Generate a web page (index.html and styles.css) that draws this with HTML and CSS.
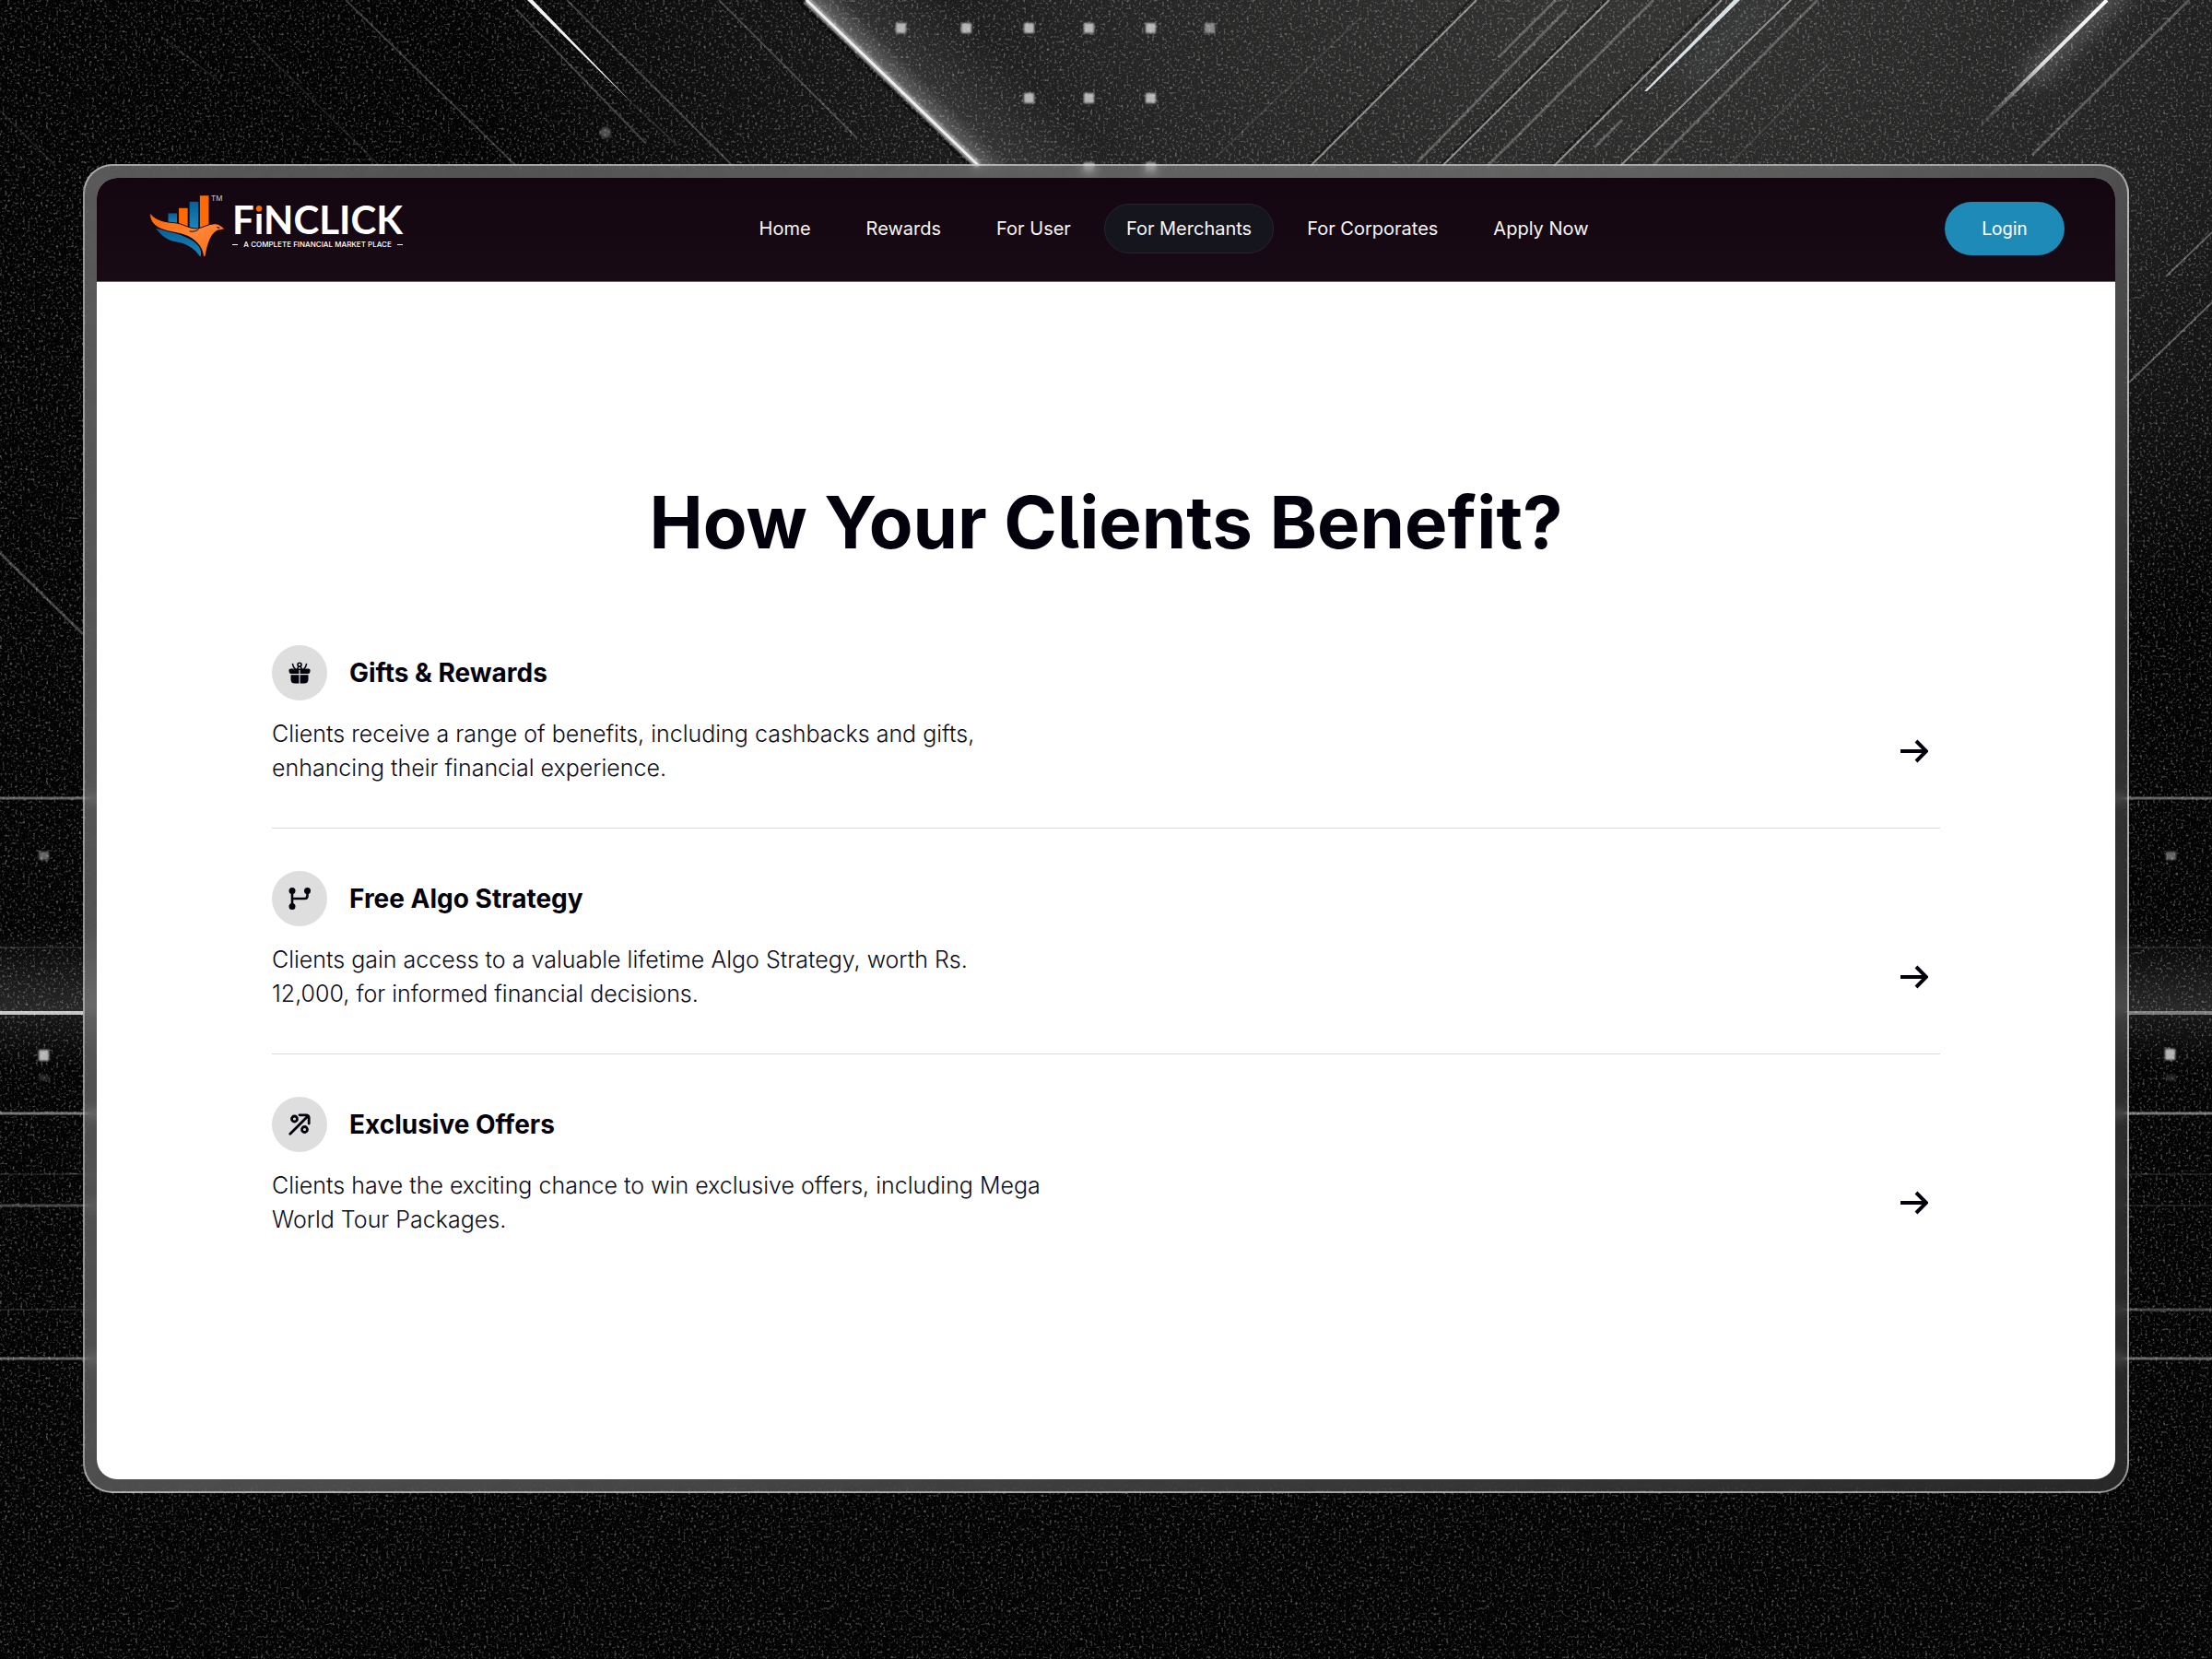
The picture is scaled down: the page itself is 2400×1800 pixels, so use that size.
FILE: index.html
```html
<!DOCTYPE html>
<html lang="en">
<head>
    <meta charset="UTF-8">
    <meta name="viewport" content="width=device-width, initial-scale=1.0">
    <title>For Merchants - FiNCLICK</title>
    <link rel="stylesheet" href="styles.css">
</head>
<body>

    <!-- Backdrop: light beams, dots and grain -->
    <svg class="backdrop" viewBox="0 0 2400 1800" preserveAspectRatio="xMidYMid slice" aria-hidden="true">
        <defs>
            <radialGradient id="sky" gradientUnits="userSpaceOnUse" cx="1750" cy="0" r="1250" gradientTransform="matrix(1 0 0 .6 0 0)">
                <stop offset="0" stop-color="#343433"/>
                <stop offset=".45" stop-color="#242424"/>
                <stop offset="1" stop-color="#030303"/>
            </radialGradient>
            <linearGradient id="beam" gradientUnits="userSpaceOnUse" x1="960" y1="90" x2="1040" y2="10">
                <stop offset="0" stop-color="#fff" stop-opacity=".4"/>
                <stop offset=".3" stop-color="#fff" stop-opacity=".1"/>
                <stop offset="1" stop-color="#fff" stop-opacity="0"/>
            </linearGradient>
            <linearGradient id="glowUp" x1="0" y1="0" x2="0" y2="1">
                <stop offset="0" stop-color="#fff" stop-opacity="0"/>
                <stop offset="1" stop-color="#fff" stop-opacity=".15"/>
            </linearGradient>
            <linearGradient id="glowDown" x1="0" y1="0" x2="0" y2="1">
                <stop offset="0" stop-color="#fff" stop-opacity=".08"/>
                <stop offset="1" stop-color="#fff" stop-opacity="0"/>
            </linearGradient>
            <linearGradient id="flare" gradientUnits="userSpaceOnUse" x1="2290" y1="0" x2="2145" y2="140">
                <stop offset="0" stop-color="#fff"/>
                <stop offset=".5" stop-color="#ddd"/>
                <stop offset="1" stop-color="#999" stop-opacity="0"/>
            </linearGradient>
            <filter id="blur" x="-50%" y="-50%" width="200%" height="200%">
                <feGaussianBlur stdDeviation="12"/>
            </filter>
            <filter id="soft" x="-20%" y="-20%" width="140%" height="140%">
                <feGaussianBlur stdDeviation="1"/>
            </filter>
            <filter id="grain" x="0" y="0" width="100%" height="100%">
                <feTurbulence type="fractalNoise" baseFrequency=".36" numOctaves="2" seed="4"/>
                <feColorMatrix values="0 0 0 0 1  0 0 0 0 1  0 0 0 0 1  3 0 0 0 -1.6"/>
            </filter>
        </defs>

        <rect width="2400" height="1800" fill="#030303"/>
        <rect width="2400" height="1800" fill="url(#sky)"/>

        <!-- diagonal lines -->
        <path d="M873 0L1060 180H1240L1060 0Z" fill="url(#beam)"/>
        <g fill="none" stroke="#fff">
            <path d="M866 0L1054 180" stroke="#000" stroke-opacity=".6" stroke-width="5"/>
            <path d="M875 0L1062 180" stroke="#999" stroke-width="8" filter="url(#soft)"/>
            <path d="M875 0L1062 180" stroke="#eee" stroke-width="3"/>
            <g stroke-opacity=".22" stroke-width="2">
                <path d="M375 0L560 180M560 10L700 155M615 0L795 180M780 0L930 150"/>
                <path d="M687 113L735 158" stroke-opacity=".12"/>
                <path d="M270 40L412 180M175 40L240 90M0 120L60 180" stroke-opacity=".1"/>
            </g>
            <path d="M1596 0L1418 180M1742 0L1562 180M1862 0L1682 180" stroke="#000" stroke-opacity=".4" stroke-width="3"/>
            <g stroke-opacity=".46" stroke-width="2">
                <path d="M1602 0L1422 180M1746 0L1565 180M1868 0L1686 180M1943 0L1758 180"/>
                <path d="M1700 10L1538 176M1794 0L1614 180M1972 0L1793 180" stroke-opacity=".24" stroke-width="3"/>
                <path d="M1688 0L1626 62M1760 130L1730 160M2375 0L2205 168" stroke-opacity=".24" stroke-width="3"/>
                <path d="M1475 20L1320 170M1985 68L1875 180" stroke-opacity=".1"/>
                <path d="M2400 252L2350 300M2400 328L2310 415" stroke-opacity=".3"/>
            </g>
            <path d="M0 600L90 688" stroke-opacity=".25" stroke-width="3"/>
            <path d="M1915 0L1830 85" stroke="#9ab" stroke-opacity=".14" stroke-width="18" filter="url(#blur)"/>
            <path d="M2310 -20L2200 88" stroke-opacity=".26" stroke-width="18" filter="url(#blur)"/>
            <path d="M2286 0L2145 140" stroke="url(#flare)" stroke-width="4"/>
        </g>
        <path d="M572 0H578L688 114Z" fill="#f4f4f4"/>
        <path d="M1881 0H1888L1787 99H1784Z" fill="#d5dfe4"/>

        <!-- horizontal lines -->
        <rect y="1010" width="2400" height="89" fill="url(#glowUp)"/>
        <rect y="1099" width="2400" height="60" fill="url(#glowDown)"/>
        <g fill="none" stroke="#fff" stroke-width="3">
            <path d="M0 866H2400M0 1474H2400" stroke-opacity=".38"/>
            <path d="M0 1099H90" stroke-opacity=".75" stroke-width="4"/>
            <path d="M2310 1099H2400" stroke-opacity=".42" stroke-width="4"/>
            <path d="M0 1208H2400" stroke-opacity=".45"/>
            <path d="M0 1308H1200M1200 1421H2400" stroke-opacity=".26"/>
            <path d="M0 1028H2400M0 1274H2400M0 1421H1200M1200 1308H2400" stroke-opacity=".1" stroke-width="2"/>
        </g>

        <!-- dots -->
        <g fill="#b4b4b4" filter="url(#soft)">
            <path d="M972 25h11v11h-11zM1043 25h11v11h-11zM1111 25h11v11h-11zM1176 25h11v11h-11zM1243 25h11v11h-11z"/>
            <path d="M1111 101h11v11h-11zM1176 101h11v11h-11zM1243 101h11v11h-11z"/>
            <path d="M1307 25h11v11h-11z" opacity=".7"/>
            <path d="M1176 176h11v11h-11zM1243 176h11v11h-11z" opacity=".8"/>
            <circle cx="657" cy="144" r="6" opacity=".4"/>
            <path d="M42 1139h11v12h-11zM2349 1138h11v12h-11z"/>
            <path d="M42 924h11v9h-11zM2350 924h11v9h-11z" opacity=".55"/>
            <path d="M42 1166h11v7h-11zM2350 1166h11v7h-11z" opacity=".2"/>
        </g>

        <rect width="2400" height="1800" filter="url(#grain)" opacity=".36"/>
    </svg>

    <div class="frame">
        <div class="screen">

            <header class="header">
                <a class="logo" href="#" aria-label="FiNCLICK home">
                    <svg class="logo-mark" viewBox="240 114 260 216" aria-hidden="true">
                        <defs>
                            <linearGradient id="orange" x1="0" y1="0" x2="1" y2="1">
                                <stop offset="0" stop-color="#ff6500"/>
                                <stop offset=".55" stop-color="#ff8435"/>
                                <stop offset="1" stop-color="#f96a0c"/>
                            </linearGradient>
                            <linearGradient id="blue" x1="0" y1="0" x2="0" y2="1">
                                <stop offset="0" stop-color="#05609a"/>
                                <stop offset="1" stop-color="#1c87b8"/>
                            </linearGradient>
                        </defs>
                        <rect x="308" y="184" width="29" height="34" fill="url(#blue)"/>
                        <rect x="343" y="167" width="29" height="60" fill="#ff6a05"/>
                        <rect x="378" y="146" width="29" height="88" fill="url(#blue)"/>
                        <rect x="412" y="126" width="29" height="112" fill="#ff6a05"/>
                        <path d="M268 234C300 240 345 250 378 268C408 284 421 303 414 327C394 298 366 281 332 277C302 272 284 254 268 234Z" fill="url(#blue)"/>
                        <path d="M248 181C260 202 290 213 328 215C356 217 374 234 402 234C424 232 438 218 462 218C476 218 484 228 495 236L471 240C448 250 438 282 430 326L423 326C420 296 404 276 374 260C344 246 310 247 284 235C256 222 246 204 248 181Z" fill="url(#orange)" stroke="#150710" stroke-width="3"/>
                        <path d="M378 243Q398 246 408 236" fill="none" stroke="#150710" stroke-width="3"/>
                        <path d="M466 227L479 231L472 234Z" fill="#150710"/>
                        <text class="logo-tm" x="449" y="144">TM</text>
                    </svg>
                    <span class="logo-text">
                        <span class="logo-name">F<span class="logo-i">i</span>NCLICK</span>
                        <span class="logo-tagline">A COMPLETE FINANCIAL MARKET PLACE</span>
                    </span>
                </a>

                <nav class="nav">
                    <a href="#">Home</a>
                    <a href="#">Rewards</a>
                    <a href="#">For User</a>
                    <a class="active" href="#">For Merchants</a>
                    <a href="#">For Corporates</a>
                    <a href="#">Apply Now</a>
                </nav>

                <button class="login" type="button">Login</button>
            </header>

            <main class="benefits">
                <h1>How Your Clients Benefit?</h1>

                <section class="benefit">
                    <div class="benefit-title">
                        <span class="benefit-icon">
                            <svg viewBox="0 0 24 24" aria-hidden="true">
                                <path d="M3 7.500H21A2 2 0 0 1 23.500 10Q23.500 13 21 13H12.600V9H11.400V13H3Q.5 13 .5 10A2 2 0 0 1 3 7.500ZM2.500 14.300H11.400V23.500H7Q2.500 23.500 2.500 19ZM12.600 14.300H21.500V19Q21.500 23.500 17 23.500H12.600Z"/>
                                <path d="M4.500 2.500Q5 6 7.500 8M19.500 2.500Q19 6 16.500 8M9.300 8.500L11 5M14.700 8.500L13 5" fill="none" stroke="currentColor" stroke-width="1.600" stroke-linecap="round"/>
                                <circle cx="12" cy="3.300" r="2" fill="none" stroke="currentColor" stroke-width="1.600"/>
                            </svg>
                        </span>
                        <h2>Gifts &amp; Rewards</h2>
                    </div>
                    <div class="benefit-body">
                        <p>Clients receive a range of benefits, including cashbacks and gifts, enhancing their financial experience.</p>
                        <a class="arrow" href="#" aria-label="Gifts &amp; Rewards">
                            <svg viewBox="0 0 30 26" aria-hidden="true"><path d="M0 13H27M17 2L28 13L17 24"/></svg>
                        </a>
                    </div>
                </section>

                <section class="benefit">
                    <div class="benefit-title">
                        <span class="benefit-icon">
                            <svg viewBox="0 0 24 24" aria-hidden="true">
                                <circle cx="4" cy="3.500" r="3.500"/>
                                <circle cx="20.500" cy="3.500" r="3.500"/>
                                <circle cx="4" cy="20.500" r="3.500"/>
                                <path d="M4 4V20M4 12H17.500Q20.500 12 20.500 9V4" fill="none" stroke="currentColor" stroke-width="2.600"/>
                            </svg>
                        </span>
                        <h2>Free Algo Strategy</h2>
                    </div>
                    <div class="benefit-body">
                        <p>Clients gain access to a valuable lifetime Algo Strategy, worth Rs. 12,000, for informed financial decisions.</p>
                        <a class="arrow" href="#" aria-label="Free Algo Strategy">
                            <svg viewBox="0 0 30 26" aria-hidden="true"><path d="M0 13H27M17 2L28 13L17 24"/></svg>
                        </a>
                    </div>
                </section>

                <section class="benefit">
                    <div class="benefit-title">
                        <span class="benefit-icon">
                            <svg viewBox="0 0 24 24" aria-hidden="true">
                                <g fill="none" stroke="currentColor" stroke-width="2.800" stroke-linecap="round" stroke-linejoin="round">
                                    <path d="M1.800 22.200L21 3M12 1.800H19Q22.200 1.800 22.200 5V11"/>
                                    <circle cx="6.500" cy="6" r="3"/>
                                    <circle cx="17.500" cy="17.500" r="3"/>
                                </g>
                            </svg>
                        </span>
                        <h2>Exclusive Offers</h2>
                    </div>
                    <div class="benefit-body">
                        <p>Clients have the exciting chance to win exclusive offers, including Mega World Tour Packages.</p>
                        <a class="arrow" href="#" aria-label="Exclusive Offers">
                            <svg viewBox="0 0 30 26" aria-hidden="true"><path d="M0 13H27M17 2L28 13L17 24"/></svg>
                        </a>
                    </div>
                </section>
            </main>

        </div>
    </div>

</body>
</html>
```

FILE: styles.css
```css
* {
    box-sizing: border-box;
}

body {
    font-family: Inter, "Liberation Sans", sans-serif;
    background-color: #030303;
    color: #03010c;
    margin: 0;
    padding: 178px 90px 180px;
    min-height: 100vh;
    display: flex;
}

.backdrop {
    position: absolute;
    top: 0;
    left: 0;
    width: 100%;
    height: 100%;
    z-index: -1;
}

.frame {
    flex: 1;
    display: flex;
    padding: 13px;
    border: 2px solid rgba(255, 255, 255, 0.5);
    border-radius: 32px;
    background: linear-gradient(120deg, rgba(255, 255, 255, 0.32), rgba(255, 255, 255, 0.24) 50%, rgba(255, 255, 255, 0.12));
    backdrop-filter: blur(6px);
}

.screen {
    flex: 1;
    background: white;
    border-radius: 22px;
    overflow: hidden;
}

.header {
    display: flex;
    justify-content: space-between;
    align-items: center;
    height: 113px;
    padding: 0 55px 2px;
    background: linear-gradient(#130610, #190b16);
    border-bottom: 1px solid #6d626b;
}

.logo {
    display: flex;
    align-items: center;
    gap: 6px;
    margin-bottom: 8px;
    color: white;
    text-decoration: none;
}

.logo-mark {
    width: 86px;
    height: 72px;
}

.logo-tm {
    font-size: 24px;
    fill: #ccc;
}

.logo-text {
    display: flex;
    flex-direction: column;
    gap: 2px;
}

.logo-name {
    font-family: Lato, sans-serif;
    font-size: 42px;
    font-weight: 700;
    line-height: 40px;
}

.logo-i {
    background: linear-gradient(#ff6a05 36%, white 36%);
    background-clip: text;
    color: transparent;
}

.logo-tagline {
    display: flex;
    align-items: center;
    justify-content: space-between;
    font-size: 8px;
    font-weight: 500;
    line-height: 10px;
}

.logo-tagline::before,
.logo-tagline::after {
    content: "";
    width: 6px;
    height: 1px;
    background: white;
}

.nav {
    display: flex;
    gap: 12px;
}

.nav a {
    padding: 0 23px;
    border: 1px solid transparent;
    border-radius: 27px;
    color: #f8f6f8;
    font-size: 20px;
    line-height: 52px;
    text-decoration: none;
}

.nav .active {
    background: #14151d;
    border-color: #262630;
}

.login {
    width: 130px;
    height: 58px;
    border: none;
    border-radius: 29px;
    background: #1e8ab8;
    color: white;
    font-family: Roboto, sans-serif;
    font-size: 20px;
    cursor: pointer;
}

.benefits {
    padding: 211px 190px 100px;
}

.benefits h1 {
    margin: 0 0 37px;
    font-size: 78px;
    font-weight: 700;
    line-height: 100px;
    text-align: center;
    font-feature-settings: "cv05";
}

.benefit {
    padding: 46px 0;
}

.benefit + .benefit {
    border-top: 1px solid #d9d9dc;
}

.benefit-title {
    display: flex;
    align-items: center;
    gap: 24px;
    margin-bottom: 18px;
}

.benefit-title h2 {
    margin: 0;
    font-size: 28px;
    font-weight: 700;
    line-height: 36px;
}

.benefit-icon {
    display: flex;
    align-items: center;
    justify-content: center;
    width: 60px;
    height: 60px;
    border-radius: 50%;
    background: #dedede;
}

.benefit-icon svg {
    width: 24px;
    height: 24px;
    fill: currentColor;
}

.benefit-body {
    display: flex;
    justify-content: space-between;
    align-items: center;
}

.benefit-body p {
    max-width: 844px;
    margin: 0;
    color: #0d0c18;
    font-size: 25px;
    font-weight: 300;
    line-height: 37px;
}

.arrow {
    display: flex;
    padding-right: 13px;
    color: #03010c;
}

.arrow svg {
    width: 30px;
    height: 26px;
    fill: none;
    stroke: currentColor;
    stroke-width: 4;
}
```
